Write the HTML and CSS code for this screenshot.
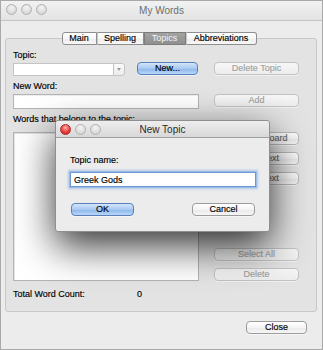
FILE: index.html
```html
<!DOCTYPE html>
<html lang="en">
<head>
    <meta charset="UTF-8">
    <title>My Words</title>
    <link rel="stylesheet" href="styles.css">
</head>
<body>
    <div class="window">
        <div class="titlebar">
            <div class="lights">
                <span class="light"></span>
                <span class="light"></span>
                <span class="light"></span>
            </div>
            <div class="title">My Words</div>
        </div>

        <div class="group">
            <div class="tabs">
                <span class="tab tab-main">Main</span>
                <span class="tab tab-spelling">Spelling</span>
                <span class="tab tab-topics selected">Topics</span>
                <span class="tab tab-abbr">Abbreviations</span>
            </div>

            <div class="label">Topic:</div>
            <div class="row row-topic">
                <div class="left">
                    <div class="combo">
                        <span class="combo-field"></span>
                        <span class="combo-arrow"></span>
                    </div>
                    <button class="btn default new-btn">New...</button>
                </div>
                <button class="btn side" disabled>Delete Topic</button>
            </div>

            <div class="label">New Word:</div>
            <div class="row row-word">
                <div class="left">
                    <input class="field" type="text">
                </div>
                <button class="btn side" disabled>Add</button>
            </div>

            <div class="label">Words that belong to the topic:</div>
            <div class="row row-list">
                <div class="list"></div>
                <div class="side-col">
                    <button class="btn side muted">From Clipboard</button>
                    <button class="btn side muted">Export Text</button>
                    <button class="btn side muted">Import Text</button>
                    <button class="btn side push" disabled>Select All</button>
                    <button class="btn side" disabled>Delete</button>
                </div>
            </div>

            <div class="count">
                <span class="count-label">Total Word Count:</span>
                <span>0</span>
            </div>
        </div>

        <div class="footer">
            <button class="btn close-btn">Close</button>
        </div>

        <!-- sheet on top of the main window -->
        <div class="dialog">
            <div class="dialog-titlebar">
                <div class="lights">
                    <span class="light red"></span>
                    <span class="light"></span>
                    <span class="light"></span>
                </div>
                <div class="title">New Topic</div>
            </div>
            <div class="dialog-body">
                <div class="label">Topic name:</div>
                <input class="field focus" type="text" value="Greek Gods">
                <div class="dialog-buttons">
                    <button class="btn default">OK</button>
                    <button class="btn">Cancel</button>
                </div>
            </div>
        </div>
    </div>
</body>
</html>
```

FILE: styles.css
```css
/* Basic Reset */
* {
    margin: 0;
    padding: 0;
    box-sizing: border-box;
    font-family: "Liberation Sans", Arial, sans-serif;
}

body {
    background: #d8d8d8;
}

/* Main Window */
.window {
    position: relative;
    width: 323px;
    height: 350px;
    background-color: #ececec;
    border: 1px solid #a9a9a9;
    font-size: 9px;
    color: #000;
    -webkit-text-stroke: 0.15px currentColor;
}

.titlebar {
    position: relative;
    height: 20px;
    background: linear-gradient(#f2f2f2, #e3e3e3);
    border-bottom: 1px solid #c4c4c4;
}

.title {
    text-align: center;
    font-size: 10px;
    line-height: 19px;
    color: #6e6e6e;
    -webkit-text-stroke: 0;
}

.lights {
    position: absolute;
    top: 3px;
    left: 5px;
    display: flex;
    gap: 4px;
}

.light {
    width: 11px;
    height: 11px;
    border-radius: 50%;
    border: 1px solid #b0b0b0;
    background: radial-gradient(circle at 50% 30%, #f4f4f4, #d9d9d9 70%);
}

.light.red {
    border-color: #a8282a;
    background: radial-gradient(circle at 50% 30%, #ffb0a8, #e8403d 55%, #b9201f);
}

/* Group Box */
.group {
    margin: 17px 5px 0 4px;
    padding: 0 17px 11px 7px;
    background-color: #e3e3e3;
    border: 1px solid #c8c8c8;
    border-radius: 3px;
}

/* Tabs */
.tabs {
    display: flex;
    justify-content: center;
    margin: -7px 0 0 -1px;
    padding-left: 7px;
}

.tab {
    height: 13px;
    line-height: 11px;
    text-align: center;
    background: linear-gradient(#ffffff, #f6f6f6 50%, #ececec 51%, #f7f7f7);
    border: 1px solid #8e8e8e;
    border-left: 1px solid #c8c8c8;
}

.tab-main {
    width: 35px;
    border-left-color: #8e8e8e;
    border-radius: 3px 0 0 3px;
}

.tab-spelling {
    width: 47px;
}

.tab-topics {
    width: 42px;
}

.tab-abbr {
    width: 71px;
    border-radius: 0 3px 3px 0;
}

.tab.selected {
    color: #f4f4f4;
    background: linear-gradient(#a3a3a3, #8f8f8f);
    border-color: #7c7c7c;
    -webkit-text-stroke: 0;
}

/* Labels */
.label {
    margin-top: 4px;
    line-height: 12px;
}

/* Rows */
.row {
    display: flex;
    gap: 15px;
}

.left {
    display: flex;
    width: 186px;
}

.row-topic {
    margin-top: 1px;
}

.row-word {
    margin-top: 2px;
}

.row-list {
    margin-top: 7px;
}

/* Buttons */
.btn {
    height: 13px;
    font-size: 9px;
    line-height: 11px;
    color: #000;
    text-align: center;
    background: linear-gradient(#ffffff, #f4f4f4 50%, #e9e9e9 51%, #f6f6f6);
    border: 1px solid #9c9c9c;
    border-radius: 4px;
    box-shadow: 0 1px 0 rgba(255, 255, 255, 0.5);
    -webkit-text-stroke: 0.15px currentColor;
}

.btn:disabled {
    color: #a2a2a2;
    background: linear-gradient(#f7f7f7, #ededed);
    border-color: #c3c3c3;
}

.btn.muted {
    color: #666;
    border-color: #b8b8b8;
}

.btn.default {
    background: linear-gradient(#d3e5fa, #a8c9f1 50%, #8ab5ec 51%, #b9d7f7);
    border-color: #5a7fbd;
}

.side {
    width: 85px;
}

.new-btn {
    width: 61px;
    margin-left: auto;
    margin-right: 1px;
}

/* Combo Box */
.combo {
    display: flex;
    width: 112px;
    height: 13px;
    margin-top: 1px;
}

.combo-field {
    flex: 1;
    background: #fff;
    border: 1px solid #c4c4c4;
    border-right: none;
}

.combo-arrow {
    position: relative;
    width: 12px;
    background: linear-gradient(#fbfbfb, #ececec);
    border: 1px solid #c4c4c4;
    border-radius: 0 3px 3px 0;
}

.combo-arrow::after {
    content: "";
    position: absolute;
    left: 3px;
    top: 4px;
    border: 2.5px solid transparent;
    border-top: 3px solid #9a9a9a;
}

/* Text Fields */
.field {
    width: 186px;
    height: 15px;
    padding: 0 3px;
    font-size: 9px;
    color: #000;
    background: #fff;
    border: 1px solid #b4b4b4;
    box-shadow: inset 0 1px 1px rgba(0, 0, 0, 0.08);
    outline: none;
    -webkit-text-stroke: 0.15px currentColor;
}

.field.focus {
    border-color: #6d98d6;
    box-shadow: 0 0 0 1px #9bbce8, 0 0 2px 2px rgba(120, 165, 225, 0.5);
}

/* Word List */
.list {
    width: 186px;
    height: 149px;
    background: #fff;
    border: 1px solid #b4b4b4;
    box-shadow: inset 1px 1px 0 #e2e2e2;
}

.side-col {
    display: flex;
    flex-direction: column;
    gap: 7px;
}

.side-col .push {
    margin-top: auto;
}

/* Total Word Count */
.count {
    display: flex;
    margin-top: 7px;
    line-height: 12px;
}

.count-label {
    width: 124px;
}

/* Footer */
.footer {
    display: flex;
    justify-content: flex-end;
    padding: 9px 15px 0 0;
}

.close-btn {
    width: 61px;
}

/* New Topic Sheet */
.dialog {
    position: absolute;
    left: 54px;
    top: 119px;
    width: 215px;
    height: 112px;
    background-color: #ececec;
    border: 1px solid #8f8f8f;
    border-radius: 3px;
    box-shadow: 0 14px 38px rgba(0, 0, 0, 0.8);
}

.dialog-titlebar {
    position: relative;
    height: 17px;
    background: linear-gradient(#eeeeee, #d8d8d8);
    border-bottom: 1px solid #a0a0a0;
    border-radius: 3px 3px 0 0;
}

.dialog-titlebar .title {
    font-size: 10px;
    line-height: 17px;
    color: #2a2a2a;
}

.dialog-titlebar .lights {
    top: 3px;
    left: 4px;
}

.dialog-body {
    padding: 16px 0 0 14px;
}

.dialog-body .label {
    margin-top: 0;
}

.dialog-body .field {
    margin-top: 6px;
}

.dialog-buttons {
    display: flex;
    gap: 58px;
    margin: 16px 0 0 1px;
}

.dialog-buttons .btn {
    width: 63px;
}
```
